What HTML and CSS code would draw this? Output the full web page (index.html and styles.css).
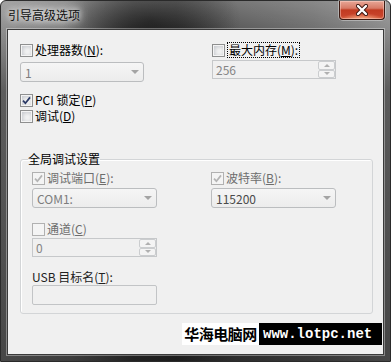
FILE: index.html
```html
<!DOCTYPE html>
<html lang="zh-CN">
  <head>
    <meta charset="UTF-8" />
    <meta name="viewport" content="width=device-width, initial-scale=1.0" />
    <title>引导高级选项</title>
    <link rel="stylesheet" href="styles.css">
  </head>
  <body>
    <div class="window">
      <div class="titlebar">
        <span class="title">引导高级选项</span>
        <div class="close">
          <svg width="12" height="12" viewBox="0 0 12 12">
            <path d="M2 2 L10 10 M10 2 L2 10" stroke="#3b1610" stroke-width="4.2" stroke-linecap="round" />
            <path d="M2 2 L10 10 M10 2 L2 10" stroke="#fff" stroke-width="2.4" stroke-linecap="round" />
          </svg>
        </div>
      </div>

      <div class="client">
        <div class="top">
          <div class="col">
            <label class="opt"><span class="box"></span><span class="txt">处理器数(<u>N</u>):</span></label>
            <div class="combo"><span>1</span></div>
            <label class="opt opt-pci"><span class="box checked">
              <svg width="9" height="9" viewBox="0 0 9 9"><path d="M1 4.6 L3.4 7.2 L8 1.4" stroke="#2b3a66" stroke-width="1.7" fill="none" /></svg>
            </span><span class="txt">PCI 锁定(<u>P</u>)</span></label>
            <label class="opt"><span class="box"></span><span class="txt">调试(<u>D</u>)</span></label>
          </div>
          <div class="col">
            <label class="opt"><span class="box"></span><span class="txt focus">最大内存(<u>M</u>):</span></label>
            <div class="spin">
              <span class="val">256</span>
              <span class="btns"><span class="up"></span><span class="down"></span></span>
            </div>
          </div>
        </div>

        <fieldset class="group">
          <legend>全局调试设置</legend>
          <div class="gbody">
            <div class="col">
              <label class="opt off"><span class="box checked">
                <svg width="9" height="9" viewBox="0 0 9 9"><path d="M1 4.6 L3.4 7.2 L8 1.4" stroke="#b4b4b4" stroke-width="1.7" fill="none" /></svg>
              </span><span class="txt">调试端口(<u>E</u>):</span></label>
              <div class="combo combo-g"><span>COM1:</span></div>
              <label class="opt off opt-chan"><span class="box"></span><span class="txt">通道(<u>C</u>)</span></label>
              <div class="spin spin-g">
                <span class="val">0</span>
                <span class="btns"><span class="up"></span><span class="down"></span></span>
              </div>
              <div class="field-label">USB 目标名(<u>T</u>):</div>
              <div class="textbox"></div>
            </div>
            <div class="col">
              <label class="opt off"><span class="box checked">
                <svg width="9" height="9" viewBox="0 0 9 9"><path d="M1 4.6 L3.4 7.2 L8 1.4" stroke="#b4b4b4" stroke-width="1.7" fill="none" /></svg>
              </span><span class="txt">波特率(<u>B</u>):</span></label>
              <div class="combo combo-g dark"><span>115200</span></div>
            </div>
          </div>
        </fieldset>
      </div>

      <div class="watermark">
        <span class="wm-cn">华海电脑网</span>
        <span class="wm-url">www.lotpc.net</span>
      </div>
    </div>
  </body>
</html>
```

FILE: styles.css
```css
body {
  margin: 0;
  background: #fff;
  font-family: "Noto Sans CJK SC", sans-serif;
  font-size: 12px;
  color: #000;
}
.window {
  position: relative;
  width: 391px;
  height: 362px;
  box-sizing: border-box;
  display: flex;
  flex-direction: column;
  border: 1px solid #2a2a2a;
  border-radius: 6px 6px 0 0;
  background:
    linear-gradient(180deg, rgba(0, 0, 0, 0) 30px, rgba(0, 0, 0, 0.35) 90px, rgba(0, 0, 0, 0.5) 100%),
    linear-gradient(180deg, rgba(255, 255, 255, 0.18), rgba(255, 255, 255, 0) 30px),
    radial-gradient(ellipse 90px 60px at 150px 20px, #1c1c1c, rgba(28, 28, 28, 0)),
    linear-gradient(90deg, #8f8f8f 0%, #7a7a7a 18%, #444 34%, #3a3a3a 45%, #5a5a5a 60%, #6e6e6e 80%, #8c8c8c 100%);
}
.titlebar {
  height: 28px;
  display: flex;
  justify-content: space-between;
  align-items: flex-start;
}
.title {
  padding: 7px 0 0 7px;
  line-height: 14px;
  color: #111;
  text-shadow: 0 0 6px #fff, 0 0 10px rgba(255, 255, 255, 0.8), 0 0 14px rgba(255, 255, 255, 0.6);
}
.close {
  width: 46px;
  height: 19px;
  box-sizing: border-box;
  margin-right: 5px;
  display: flex;
  align-items: center;
  justify-content: center;
  border: 1px solid #3d1a12;
  border-top: 0;
  border-radius: 0 0 4px 4px;
  background:
    radial-gradient(ellipse 20px 6px at 50% 100%, rgba(255, 190, 150, 0.8), rgba(255, 190, 150, 0)),
    linear-gradient(180deg, #e8a797 0%, #d77a66 40%, #c13b21 50%, #c8432a 80%, #d6603f 100%);
  box-shadow: 0 0 0 1px rgba(255, 255, 255, 0.35), inset 0 0 0 1px rgba(255, 220, 210, 0.45);
}
.client {
  flex: 1;
  margin: 0 6px 6px;
  padding: 12px 10px 0 12px;
  border: 1px solid #3a3a3a;
  background: #f0f0f0;
  box-shadow: 0 0 0 1px rgba(255, 255, 255, 0.35);
}
.top {
  display: grid;
  grid-template-columns: 124px 124px;
  column-gap: 68px;
  align-items: start;
}
.col {
  display: flex;
  flex-direction: column;
}
.opt {
  height: 16px;
  display: flex;
  align-items: center;
  gap: 2px;
  white-space: nowrap;
}
.opt .txt {
  line-height: 14px;
}
.opt-pci {
  margin-top: 10px;
}
.opt.off {
  color: #6d6d6d;
}
.focus {
  border: 1px dotted #000;
  padding: 0 1px;
}
.box {
  width: 13px;
  height: 13px;
  box-sizing: border-box;
  flex: none;
  display: flex;
  align-items: center;
  justify-content: center;
  border: 1px solid #8e8f8f;
  background: #f4f4f4;
  box-shadow: inset 0 0 0 1px #f4f4f4, inset 1px 1px 4px 1px #c4c7cc;
}
.off .box {
  border-color: #b1b1b1;
  box-shadow: none;
  background: #f4f4f4;
}
.combo {
  margin-top: 4px;
  height: 20px;
  box-sizing: border-box;
  padding: 0 4px;
  display: flex;
  align-items: center;
  justify-content: space-between;
  border: 1px solid #bbbdbf;
  border-radius: 3px;
  background: linear-gradient(180deg, #f5f5f5, #ececec);
  color: #7d7d7d;
}
.combo::after {
  content: "";
  border-left: 4px solid transparent;
  border-right: 4px solid transparent;
  border-top: 4px solid #a4a4a4;
}
.combo-g {
  margin-top: 2px;
}
.combo.dark {
  color: #4a4a4a;
}
.spin {
  margin-top: 2px;
  height: 19px;
  box-sizing: border-box;
  display: flex;
  border: 1px solid #c6c8ca;
  background: #f0f0f0;
}
.spin .val {
  flex: 1;
  padding-left: 3px;
  line-height: 17px;
  color: #858585;
}
.spin .btns {
  width: 17px;
  display: flex;
  flex-direction: column;
}
.spin .up,
.spin .down {
  flex: 1;
  display: flex;
  align-items: center;
  justify-content: center;
  border: 1px solid #cbcdcf;
  border-radius: 2px;
  background: #f4f4f4;
}
.spin .up::after {
  content: "";
  border-left: 3px solid transparent;
  border-right: 3px solid transparent;
  border-bottom: 3px solid #b0b0b0;
}
.spin .down::after {
  content: "";
  border-left: 3px solid transparent;
  border-right: 3px solid transparent;
  border-top: 3px solid #b0b0b0;
}
.group {
  margin: 28px 0 0;
  padding: 0 0 8px;
  min-width: 0;
  border: 1px solid #d3d5d7;
  border-radius: 3px;
  box-shadow: inset 1px 1px 0 #fff;
}
.group legend {
  margin-left: 7px;
  padding: 0;
  line-height: 14px;
}
.gbody {
  padding: 4px 0 0 11px;
  display: grid;
  grid-template-columns: 125px 125px;
  column-gap: 54px;
  align-items: start;
}
.opt-chan {
  margin-top: 13px;
}
.spin-g {
  margin-top: 1px;
}
.field-label {
  margin-top: 13px;
  line-height: 14px;
  color: #222;
  white-space: nowrap;
}
.textbox {
  margin-top: 1px;
  height: 20px;
  box-sizing: border-box;
  border: 1px solid #c2c4c6;
  border-radius: 2px;
  background: #f0f0f0;
}
.watermark {
  position: absolute;
  left: 181px;
  top: 322px;
  height: 22px;
  display: flex;
}
.wm-cn {
  width: 77px;
  background: #fff;
  color: #000;
  font-size: 15px;
  font-weight: bold;
  line-height: 22px;
  text-align: center;
  letter-spacing: -0.5px;
}
.wm-url {
  width: 123px;
  box-sizing: border-box;
  padding-left: 4px;
  background: #000;
  color: #fff;
  font-family: "Liberation Mono", monospace;
  font-size: 14px;
  font-weight: bold;
  line-height: 22px;
}
```
